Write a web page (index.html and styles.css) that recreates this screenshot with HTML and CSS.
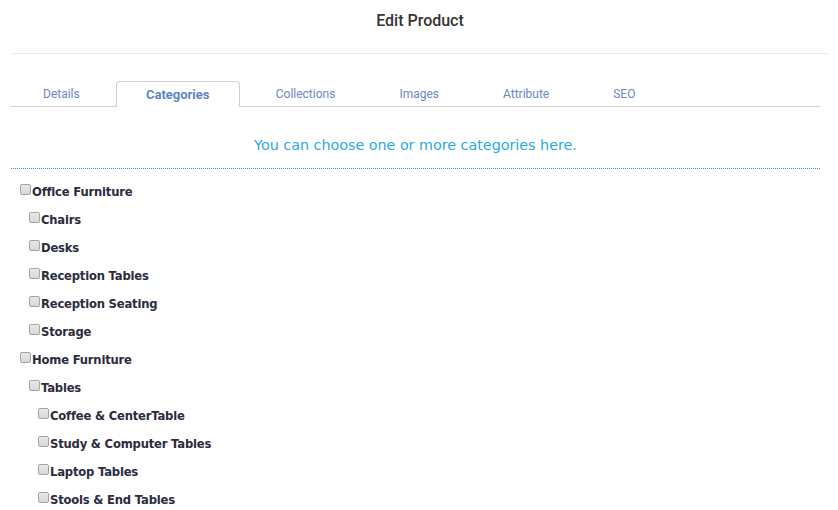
FILE: index.html
```html
<!DOCTYPE html>
<html>
<head>
<meta charset="utf-8">
<link rel="stylesheet" href="styles.css">
</head>
<body>
<div class="header"><h1 class="title">Edit Product</h1></div>
<div class="content">
  <ul class="tabs">
    <li class="tab">Details</li>
    <li class="tab active">Categories</li>
    <li class="tab">Collections</li>
    <li class="tab">Images</li>
    <li class="tab">Attribute</li>
    <li class="tab">SEO</li>
  </ul>
  <p class="hint">You can choose one or more categories here.</p>
  <ul class="cats">
    <li class="cat l0"><span class="cb"></span>Office Furniture</li>
    <li class="cat l1"><span class="cb"></span>Chairs</li>
    <li class="cat l1"><span class="cb"></span>Desks</li>
    <li class="cat l1"><span class="cb"></span>Reception Tables</li>
    <li class="cat l1"><span class="cb"></span>Reception Seating</li>
    <li class="cat l1"><span class="cb"></span>Storage</li>
    <li class="cat l0"><span class="cb"></span>Home Furniture</li>
    <li class="cat l1"><span class="cb"></span>Tables</li>
    <li class="cat l2"><span class="cb"></span>Coffee &amp; CenterTable</li>
    <li class="cat l2"><span class="cb"></span>Study &amp; Computer Tables</li>
    <li class="cat l2"><span class="cb"></span>Laptop Tables</li>
    <li class="cat l2"><span class="cb"></span>Stools &amp; End Tables</li>
  </ul>
</div>
</body>
</html>
```
FILE: styles.css
```css
html, body { margin: 0; padding: 0; background: #fff; }
body { font-family: Roboto, "Liberation Sans", sans-serif; }
.header {
  margin: 0 9px 0 11px;
  height: 53px;
  border-bottom: 1px solid #ececec;
  display: flex;
  justify-content: center;
}
.title {
  margin: 12px 0 0 0;
  font-size: 16px;
  font-weight: 500;
  color: #333;
  line-height: 18px;
}
.content { margin: 0 18px 0 11px; }
.tabs {
  list-style: none;
  margin: 27px 0 0 0;
  padding: 0;
  display: flex;
  border-bottom: 1px solid #cfcfcf;
  height: 25px;
}
.tab {
  font-size: 12px;
  color: #6a86c4;
  padding: 0 31px;
  line-height: 24px;
  border: 1px solid transparent;
  border-bottom: none;
}
.tab.active {
  box-sizing: border-box;
  width: 124px;
  padding: 0;
  margin: 0 4px;
  text-align: center;
  font-weight: 700;
  font-size: 13px;
  color: #5a86c5;
  border-color: #cfcfcf;
  border-radius: 4px 4px 0 0;
  background: #fff;
  height: 26px;
  margin-bottom: -1px;
  line-height: 26px;
}
.hint {
  margin: 0;
  padding: 29px 0 14px;
  text-align: center;
  font-family: "DejaVu Sans", Verdana, sans-serif;
  font-size: 14.3px;
  color: #2aaae4;
  border-bottom: 1px dotted #1fa3e0;
  line-height: 18px;
}
.cats { list-style: none; margin: 0; padding: 9px 0 0 0; }
.cat {
  display: flex;
  align-items: center;
  height: 28px;
  font-family: "DejaVu Sans", Tahoma, sans-serif;
  font-weight: 700;
  font-size: 11.6px;
  letter-spacing: -0.2px;
  color: #2b2b3d;
}
.l0 { padding-left: 9px; }
.l1 { padding-left: 18px; }
.l2 { padding-left: 27px; }
.cb {
  width: 9px;
  height: 9px;
  border: 1px solid #a3a3a3;
  border-radius: 2px;
  background: linear-gradient(#e8e8e8, #d8d8d8);
  margin-right: 1px;
  margin-top: -5px;
  flex: none;
}
```
